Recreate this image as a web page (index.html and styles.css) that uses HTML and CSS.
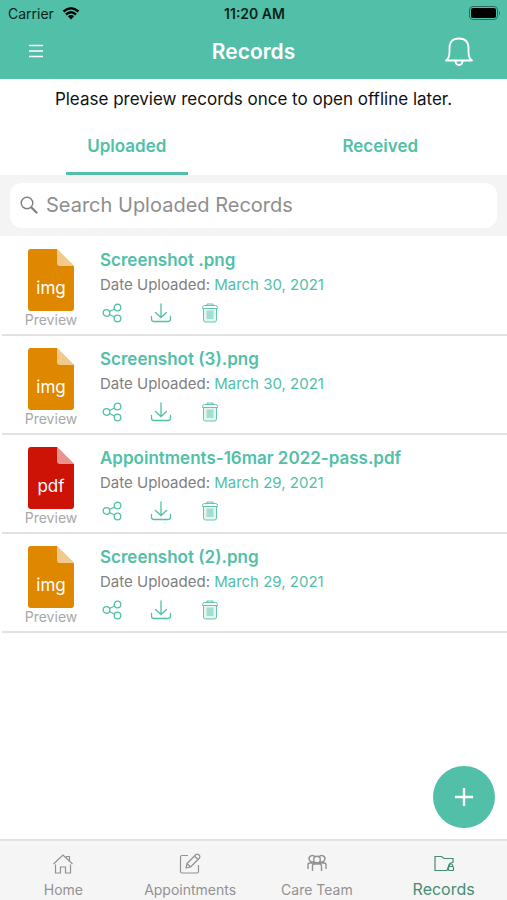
FILE: index.html
```html
<!DOCTYPE html>
<html lang="en">
<head>
    <meta charset="UTF-8">
    <meta name="viewport" content="width=device-width, initial-scale=1.0">
    <title>Records</title>
    <link rel="stylesheet" href="styles.css">
</head>
<body>
    <!-- Shared icons -->
    <svg class="icon-defs" aria-hidden="true">
        <symbol id="icon-file" viewBox="0 0 46 62">
            <path d="M3 0H29L46 17V59Q46 62 43 62H3Q0 62 0 59V3Q0 0 3 0Z" fill="currentColor"/>
            <path d="M29 0L46 17H32Q29 17 29 14Z" fill="#fff" fill-opacity="0.55"/>
        </symbol>
        <symbol id="icon-share" viewBox="0 0 20 20">
            <g fill="none" stroke="currentColor" stroke-width="1.3">
                <circle cx="4.5" cy="10" r="3.3"/>
                <circle cx="15.5" cy="4.5" r="3.3"/>
                <circle cx="15.5" cy="15.5" r="3.3"/>
                <path d="M7.5 8.5L12.5 6M7.5 11.5L12.5 14"/>
            </g>
        </symbol>
        <symbol id="icon-download" viewBox="0 0 22 20">
            <path d="M11 1V14.500M5.500 9.500L11 14.500L16.500 9.500M1.500 13.500V16Q1.500 18.500 4 18.500H18Q20.500 18.500 20.500 16V13.500" fill="none" stroke="currentColor" stroke-width="1.300" stroke-linecap="round"/>
        </symbol>
        <symbol id="icon-trash" viewBox="0 0 18 20">
            <path d="M2.500 5.500H15.500V17Q15.500 19 13.500 19H4.500Q2.500 19 2.500 17Z" fill="currentColor" fill-opacity="0.15"/>
            <path d="M5.500 7.500H12.500V16H5.500Z" fill="currentColor" fill-opacity="0.45"/>
            <path d="M2.500 5.500V17Q2.500 19 4.500 19H13.500Q15.500 19 15.500 17V5.500M1.500 5.500H16.500V4.500Q16.500 2.500 14.500 2.500H3.500Q1.500 2.500 1.500 4.500ZM6 2.500V1H12V2.500" fill="none" stroke="currentColor" stroke-width="0.900"/>
        </symbol>
    </svg>

    <div class="app">
        <header class="top">
            <div class="status-bar">
                <span class="carrier">Carrier
                    <svg class="wifi" viewBox="0 0 18 13">
                        <path d="M1.500 4.500Q9 -2 16.500 4.500M4 7.500Q9 3 14 7.500" fill="none" stroke="currentColor" stroke-width="2.400"/>
                        <path d="M5.800 9.300Q9 6.800 12.200 9.300L9 12.500Z" fill="currentColor"/>
                    </svg>
                </span>
                <span class="time">11:20 AM</span>
                <svg class="battery" viewBox="0 0 32 14">
                    <rect x="0.500" y="0.500" width="28" height="13" rx="3.500" fill="none" stroke="#2b6b5c"/>
                    <rect x="2" y="2" width="25" height="10" rx="2" fill="#000"/>
                    <path d="M30 5Q32 7 30 9Z" fill="#2b6b5c"/>
                </svg>
            </div>
            <div class="nav-bar">
                <button class="nav-btn" aria-label="Menu">
                    <svg class="menu-icon" viewBox="0 0 14 14"><path d="M0 1.500H14M0 7H14M0 12.500H14" stroke="currentColor" stroke-width="1.400"/></svg>
                </button>
                <h1>Records</h1>
                <button class="nav-btn bell-btn" aria-label="Notifications">
                    <svg class="bell-icon" viewBox="0 0 28 30">
                        <path d="M1 24.500Q4.500 22 4.500 16V12Q4.500 2.500 14 2.500Q23.500 2.500 23.500 12V16Q23.500 22 27 24.500ZM10.500 24.500Q10.500 29 14 29Q17.500 29 17.500 24.500" fill="none" stroke="currentColor" stroke-width="1.800" stroke-linejoin="round"/>
                    </svg>
                </button>
            </div>
        </header>

        <main>
            <p class="notice">Please preview records once to open offline later.</p>

            <div class="tabs">
                <button class="tab active">Uploaded</button>
                <button class="tab">Received</button>
            </div>

            <div class="search">
                <label class="search-box">
                    <svg class="search-icon" viewBox="0 0 18 18"><circle cx="7" cy="7" r="5.800" fill="none" stroke="currentColor" stroke-width="1.400"/><path d="M11.500 11.500L16.500 16.500" stroke="currentColor" stroke-width="2.200" stroke-linecap="round"/></svg>
                    <input type="search" placeholder="Search Uploaded Records" aria-label="Search Uploaded Records">
                </label>
            </div>

            <!-- Uploaded records -->
            <ul class="records">
                <li class="record">
                    <a href="#" class="preview">
                        <span class="file"><svg><use href="#icon-file"/></svg><span class="file-type">img</span></span>
                        <span class="preview-text">Preview</span>
                    </a>
                    <div class="details">
                        <h2>Screenshot .png</h2>
                        <p>Date Uploaded: <span class="date">March 30, 2021</span></p>
                        <div class="actions">
                            <button aria-label="Share"><svg><use href="#icon-share"/></svg></button>
                            <button aria-label="Download"><svg><use href="#icon-download"/></svg></button>
                            <button aria-label="Delete"><svg><use href="#icon-trash"/></svg></button>
                        </div>
                    </div>
                </li>
                <li class="record">
                    <a href="#" class="preview">
                        <span class="file"><svg><use href="#icon-file"/></svg><span class="file-type">img</span></span>
                        <span class="preview-text">Preview</span>
                    </a>
                    <div class="details">
                        <h2>Screenshot (3).png</h2>
                        <p>Date Uploaded: <span class="date">March 30, 2021</span></p>
                        <div class="actions">
                            <button aria-label="Share"><svg><use href="#icon-share"/></svg></button>
                            <button aria-label="Download"><svg><use href="#icon-download"/></svg></button>
                            <button aria-label="Delete"><svg><use href="#icon-trash"/></svg></button>
                        </div>
                    </div>
                </li>
                <li class="record">
                    <a href="#" class="preview">
                        <span class="file pdf"><svg><use href="#icon-file"/></svg><span class="file-type">pdf</span></span>
                        <span class="preview-text">Preview</span>
                    </a>
                    <div class="details">
                        <h2>Appointments-16mar 2022-pass.pdf</h2>
                        <p>Date Uploaded: <span class="date">March 29, 2021</span></p>
                        <div class="actions">
                            <button aria-label="Share"><svg><use href="#icon-share"/></svg></button>
                            <button aria-label="Download"><svg><use href="#icon-download"/></svg></button>
                            <button aria-label="Delete"><svg><use href="#icon-trash"/></svg></button>
                        </div>
                    </div>
                </li>
                <li class="record">
                    <a href="#" class="preview">
                        <span class="file"><svg><use href="#icon-file"/></svg><span class="file-type">img</span></span>
                        <span class="preview-text">Preview</span>
                    </a>
                    <div class="details">
                        <h2>Screenshot (2).png</h2>
                        <p>Date Uploaded: <span class="date">March 29, 2021</span></p>
                        <div class="actions">
                            <button aria-label="Share"><svg><use href="#icon-share"/></svg></button>
                            <button aria-label="Download"><svg><use href="#icon-download"/></svg></button>
                            <button aria-label="Delete"><svg><use href="#icon-trash"/></svg></button>
                        </div>
                    </div>
                </li>
            </ul>
        </main>

        <div class="bottom">
            <button class="add-btn" aria-label="Add record">
                <svg viewBox="0 0 18 18"><path d="M9 0V18M0 9H18" stroke="currentColor" stroke-width="2.400"/></svg>
            </button>
            <nav class="tab-bar">
                <a href="#">
                    <svg viewBox="0 0 22 22"><path d="M1.500 11L11 2L20.500 11M3.500 11.500V20H8.500V14H13.500V20H18.500V11.500M14.500 4.500V3.500H17.500V8" fill="none" stroke="currentColor" stroke-width="1.200"/></svg>
                    Home
                </a>
                <a href="#">
                    <svg viewBox="0 0 22 22"><path d="M9 2.500H3Q1.500 2.500 1.500 4V18.500Q1.500 20 3 20H18Q19.500 20 19.500 18.500V12M7 15L8 10.500L17 1.500Q18.500 0.500 20 2Q21.500 3.500 20.500 5L11.500 14ZM8 10.500L11.500 14M15.500 3L19 6.500" fill="none" stroke="currentColor" stroke-width="1.200" stroke-linejoin="round"/></svg>
                    Appointments
                </a>
                <a href="#">
                    <svg viewBox="0 0 22 22"><path d="M7.700 6.500A3.300 3.300 0 1 0 14.300 6.500A3.300 3.300 0 1 0 7.700 6.500M7.500 8.700A3.200 3.200 0 1 1 9 4M14.500 8.700A3.200 3.200 0 1 0 13 4M2 16V11.500Q2 10 4 10H18Q20 10 20 11.500V16M6.500 18V13Q6.500 11 8.500 11H13.500Q15.500 11 15.500 13V18" fill="none" stroke="currentColor" stroke-width="1.400"/></svg>
                    Care Team
                </a>
                <a href="#" class="active">
                    <svg viewBox="0 0 22 22"><g fill="none" stroke="currentColor" stroke-width="1.200"><path d="M14 17.500H2V3.500H8.500L11 5.500H20V9.500Q16.500 9.500 16 12L14 17.500"/><rect x="15.500" y="13.500" width="5" height="4" rx="1"/><path d="M16.500 13.500V12Q18 9.500 19.500 12V13.500"/></g></svg>
                    Records
                </a>
            </nav>
        </div>
    </div>
</body>
</html>
```

FILE: styles.css
```css
* {
    box-sizing: border-box;
}
body {
    margin: 0;
    font-family: Inter, "Liberation Sans", sans-serif;
    background-color: #fff;
    color: #111;
}
button {
    padding: 0;
    border: none;
    background: none;
    font-family: inherit;
    color: inherit;
    cursor: pointer;
}
svg {
    display: block;
}
.icon-defs {
    display: none;
}
.app {
    display: flex;
    flex-direction: column;
    min-height: 100vh;
}
main {
    flex: 1;
}

/* Header */
.top {
    background-color: #52c0a8;
    padding-bottom: 3px;
}
.status-bar {
    display: grid;
    grid-template-columns: 1fr auto 1fr;
    align-items: center;
    height: 26px;
    padding: 0 6px 0 8px;
    font-size: 14px;
    color: #0b1f1a;
}
.carrier {
    display: flex;
    align-items: center;
    gap: 8px;
}
.wifi {
    width: 18px;
    height: 13px;
    color: #000;
}
.time {
    font-weight: 600;
}
.battery {
    width: 32px;
    height: 14px;
    justify-self: end;
}
.nav-bar {
    display: grid;
    grid-template-columns: 72px 1fr 72px;
    align-items: center;
    height: 50px;
    color: #fff;
}
.nav-bar h1 {
    margin: 0;
    font-size: 21px;
    font-weight: 600;
    text-align: center;
}
.nav-btn {
    display: flex;
    justify-content: center;
    align-items: center;
    height: 44px;
}
.bell-btn {
    justify-content: flex-start;
    padding-left: 10px;
}
.menu-icon {
    width: 14px;
    height: 14px;
}
.bell-icon {
    width: 28px;
    height: 30px;
}

/* Notice and tabs */
.notice {
    margin: 0;
    padding-top: 10px;
    font-size: 17px;
    line-height: 20px;
    text-align: center;
}
.tabs {
    display: grid;
    grid-template-columns: 1fr 1fr;
    justify-items: center;
    margin-top: 8px;
}
.tab {
    width: 122px;
    height: 58px;
    padding-top: 2px;
    border-bottom: 3px solid transparent;
    font-size: 17px;
    font-weight: 600;
    color: #52c0a8;
}
.tab.active {
    border-bottom-color: #52c0a8;
}

/* Search */
.search {
    padding: 8px 10px;
    background-color: #f4f4f4;
}
.search-box {
    display: flex;
    align-items: center;
    gap: 8px;
    height: 45px;
    padding: 0 10px 2px;
    border-radius: 12px;
    background-color: #fff;
}
.search-icon {
    width: 18px;
    height: 18px;
    color: #808080;
}
.search-box input {
    flex: 1;
    min-width: 0;
    padding: 0;
    border: none;
    outline: none;
    background: none;
    font-family: inherit;
    font-size: 20px;
    color: #333;
}
.search-box input::placeholder {
    color: #8e8e8e;
}

/* Records */
.records {
    margin: 0;
    padding: 1px 0 0 2px;
    list-style: none;
}
.record {
    display: flex;
    gap: 20px;
    height: 99px;
    padding: 12px 16px 0 20px;
    border-bottom: 2px solid #e2e2e2;
}
.preview {
    display: flex;
    flex-direction: column;
    align-items: center;
    width: 58px;
    text-decoration: none;
}
.preview-text {
    font-size: 14px;
    line-height: 17px;
    color: #a8a8a8;
}
.file {
    display: grid;
    place-items: center;
    color: #e08700;
}
.file svg {
    grid-area: 1 / 1;
    width: 46px;
    height: 62px;
}
.file.pdf {
    color: #cd1306;
}
.file-type {
    grid-area: 1 / 1;
    padding-top: 16px;
    font-size: 17px;
    line-height: 20px;
    color: #fff;
    z-index: 1;
}
.details h2 {
    margin: 0;
    font-size: 17px;
    font-weight: 600;
    line-height: 22px;
    color: #52c0a8;
}
.details p {
    margin: 4px 0 8px;
    font-size: 15px;
    line-height: 20px;
    color: #808080;
}
.date {
    color: #52c0a8;
}
.actions {
    display: flex;
    gap: 25px;
    color: #52c0a8;
}
.actions svg {
    width: 24px;
    height: 20px;
}

/* Bottom bar */
.bottom {
    position: sticky;
    bottom: 0;
}
.add-btn {
    position: absolute;
    right: 12px;
    bottom: 72px;
    display: flex;
    justify-content: center;
    align-items: center;
    width: 62px;
    height: 62px;
    border-radius: 50%;
    background-color: #52c0a8;
    color: #fff;
}
.add-btn svg {
    width: 18px;
    height: 18px;
}
.tab-bar {
    display: grid;
    grid-template-columns: repeat(4, 1fr);
    height: 61px;
    border-top: 2px solid #e2e2e2;
    background-color: #f5f5f5;
}
.tab-bar a {
    display: flex;
    flex-direction: column;
    align-items: center;
    gap: 5px;
    padding-top: 12px;
    font-size: 14px;
    line-height: 20px;
    color: #929292;
    text-decoration: none;
}
.tab-bar svg {
    width: 22px;
    height: 22px;
}
.tab-bar .active {
    gap: 4px;
    font-size: 16px;
    color: #458c74;
}
```
